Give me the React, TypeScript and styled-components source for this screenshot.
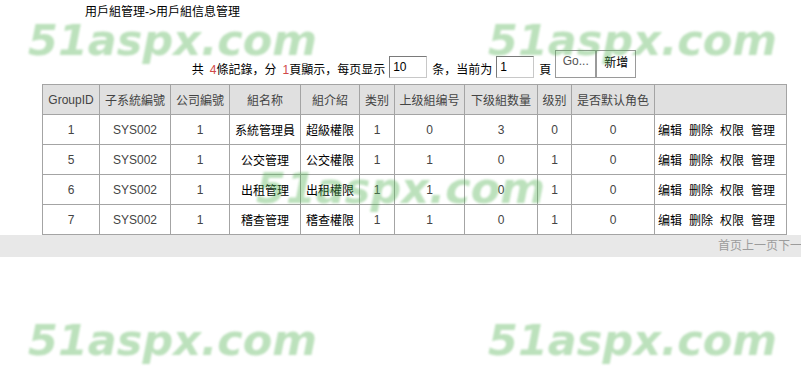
import styled, { createGlobalStyle } from "styled-components";

const GlobalStyle = createGlobalStyle`
    body {
        margin: 0;
        background: #ffffff;
        font-family: "Liberation Sans", "Noto Sans CJK SC", sans-serif;
        font-size: 12px;
        color: #000000;
    }
`;

const Page = styled.div`
    position: relative;
    width: 801px;
    min-height: 384px;
    overflow: hidden;
`;

const Title = styled.div`
    padding: 5px 0 0 85px;
    line-height: 14px;
    height: 14px;
`;

const Content = styled.div`
    width: 744px;
    margin-left: 42px;
`;

const Toolbar = styled.div`
    display: flex;
    align-items: flex-end;
    justify-content: center;
    margin-top: 31px;
    height: 28px;
    white-space: nowrap;
`;

const Label = styled.span`
    line-height: 14px;
    margin-bottom: 1px;
`;

const Count = styled.span`
    margin-left: 6px;
    color: #d04848;
`;

const PageInput = styled.input`
    box-sizing: border-box;
    width: 38px;
    height: 22px;
    margin: 0 5px 0 4px;
    padding: 2px 3px;
    border: 1px solid #7a7a7a;
    border-right-color: #c8c8c8;
    border-bottom-color: #c8c8c8;
    font-family: "Liberation Sans", sans-serif;
    font-size: 12px;
    color: #000;
`;

const Button = styled.button<{ $first?: boolean }>`
    box-sizing: border-box;
    width: ${(p) => (p.$first ? "41px" : "40px")};
    height: 28px;
    margin-left: ${(p) => (p.$first ? "4px" : "0")};
    padding: 0 0 6px;
    border: 1px solid #9a9a9a;
    background: #ffffff;
    font-family: "Liberation Sans", "Noto Sans CJK SC", sans-serif;
    font-size: 12px;
    color: ${(p) => (p.$first ? "#555" : "#000")};
`;

const Table = styled.table`
    border-collapse: collapse;
    width: 744px;
    margin-top: 6px;
    table-layout: fixed;
    border: 1px solid #a4a4a4;
`;

const Th = styled.th`
    height: 29px;
    padding: 0;
    background: #e0e0e0;
    border: 1px solid #a4a4a4;
    font-weight: normal;
    color: #444;
    text-align: center;
    white-space: nowrap;
`;

const Td = styled.td<{ $num?: boolean }>`
    height: 29px;
    padding: 0;
    border: 1px solid #a4a4a4;
    text-align: center;
    white-space: nowrap;
    color: ${(p) => (p.$num ? "#444" : "#000")};
`;

const ActionCell = styled.td`
    height: 29px;
    padding: 0 0 0 3px;
    border: 1px solid #a4a4a4;
`;

const Actions = styled.div`
    display: flex;
    gap: 7px;
`;

const ActionLink = styled.span`
    color: #000;
    cursor: pointer;
`;

const FooterBar = styled.div`
    display: flex;
    justify-content: flex-end;
    height: 22px;
    background: #e8e8e8;
    overflow: hidden;
    white-space: nowrap;
`;

const PagerLinks = styled.span`
    margin-right: -13px;
    line-height: 22px;
    color: #9c9c9c;
`;

const Watermark = styled.span<{ $x: number; $y: number }>`
    position: absolute;
    left: ${(p) => p.$x}px;
    top: ${(p) => p.$y}px;
    font-family: "DejaVu Sans", sans-serif;
    font-weight: bold;
    font-style: oblique;
    font-size: 43px;
    line-height: 1;
    color: rgba(80, 175, 80, 0.38);
    filter: blur(0.8px);
    pointer-events: none;
    white-space: nowrap;
`;

const widths = [57, 71, 59, 71, 59, 35, 70, 73, 34, 83, 132];
const headers = ["GroupID", "子系統編號", "公司編號", "組名称", "組介紹", "类别", "上级組编号", "下级組数量", "级别", "是否默认角色", ""];

const rows = [
    { id: 1, name: "系統管理員", desc: "超級權限", type: 1, parent: 0, children: 3, level: 0 },
    { id: 5, name: "公交管理", desc: "公交權限", type: 1, parent: 1, children: 0, level: 1 },
    { id: 6, name: "出租管理", desc: "出租權限", type: 1, parent: 1, children: 0, level: 1 },
    { id: 7, name: "稽查管理", desc: "稽查權限", type: 1, parent: 1, children: 0, level: 1 },
];

const marks = [
    [28, 19],
    [488, 19],
    [256, 167],
    [28, 319],
    [488, 319],
];

export default function App() {
    return (
        <Page>
            <GlobalStyle />
            <Title>用戶組管理-&gt;用戶組信息管理</Title>
            <Content>
                <Toolbar>
                    <Label>
                        共<Count>4</Count>條記錄，分<Count>1</Count>頁顯示，每页显示
                    </Label>
                    <PageInput defaultValue="10" />
                    <Label>条，当前为</Label>
                    <PageInput defaultValue="1" />
                    <Label>頁</Label>
                    <Button $first>Go...</Button>
                    <Button>新增</Button>
                </Toolbar>
                <Table>
                    <colgroup>
                        {widths.map((w, i) => (
                            <col key={i} style={{ width: w }} />
                        ))}
                    </colgroup>
                    <thead>
                        <tr>
                            {headers.map((h, i) => (
                                <Th key={i}>{h}</Th>
                            ))}
                        </tr>
                    </thead>
                    <tbody>
                        {rows.map((r) => (
                            <tr key={r.id}>
                                <Td $num>{r.id}</Td>
                                <Td $num>SYS002</Td>
                                <Td $num>1</Td>
                                <Td>{r.name}</Td>
                                <Td>{r.desc}</Td>
                                <Td $num>{r.type}</Td>
                                <Td $num>{r.parent}</Td>
                                <Td $num>{r.children}</Td>
                                <Td $num>{r.level}</Td>
                                <Td $num>0</Td>
                                <ActionCell>
                                    <Actions>
                                        <ActionLink>编辑</ActionLink>
                                        <ActionLink>删除</ActionLink>
                                        <ActionLink>权限</ActionLink>
                                        <ActionLink>管理</ActionLink>
                                    </Actions>
                                </ActionCell>
                            </tr>
                        ))}
                    </tbody>
                </Table>
            </Content>
            <FooterBar>
                <PagerLinks>首页上一页下一页</PagerLinks>
            </FooterBar>
            {marks.map(([x, y], i) => (
                <Watermark key={i} $x={x} $y={y}>
                    51aspx.com
                </Watermark>
            ))}
        </Page>
    );
}
